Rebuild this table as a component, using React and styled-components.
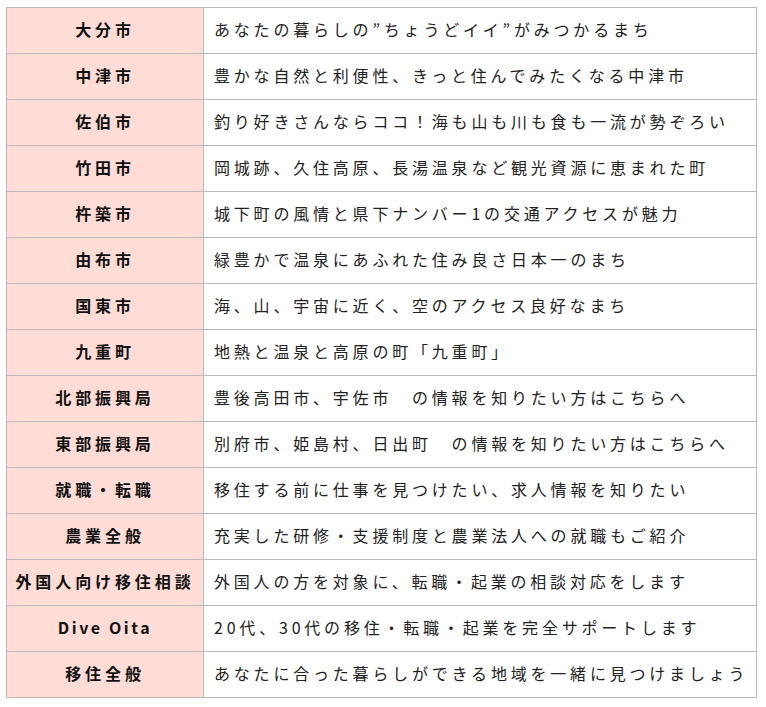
import styled, { createGlobalStyle } from "styled-components";

const GlobalStyle = createGlobalStyle`
  body {
    margin: 0;
    background: #fff;
    font-family: "Noto Sans CJK JP", "Noto Sans", sans-serif;
  }
`;

const Wrap = styled.div`
  padding: 7px 0 0 6px;
`;

const Table = styled.table`
  width: 751px;
  border-collapse: collapse;
  border: 1px solid #bbb;
`;

const Head = styled.th`
  width: 196px;
  height: 42px;
  padding: 0 0 3px;
  border: 1px solid #bbb;
  background: #ffdcd6;
  color: #111;
  font-size: 16px;
  font-weight: bold;
  letter-spacing: ${({ $latin }) => ($latin ? "2.6px" : "3.9px")};
  text-align: center;
  white-space: nowrap;
`;

const Cell = styled.td`
  height: 42px;
  padding: 0 0 3px 10px;
  border: 1px solid #bbb;
  color: #222;
  font-size: 16px;
  letter-spacing: 3.8px;
  white-space: nowrap;
`;

const rows = [
  ["大分市", "あなたの暮らしの”ちょうどイイ”がみつかるまち"],
  ["中津市", "豊かな自然と利便性、きっと住んでみたくなる中津市"],
  ["佐伯市", "釣り好きさんならココ！海も山も川も食も一流が勢ぞろい"],
  ["竹田市", "岡城跡、久住高原、長湯温泉など観光資源に恵まれた町"],
  ["杵築市", "城下町の風情と県下ナンバー1の交通アクセスが魅力"],
  ["由布市", "緑豊かで温泉にあふれた住み良さ日本一のまち"],
  ["国東市", "海、山、宇宙に近く、空のアクセス良好なまち"],
  ["九重町", "地熱と温泉と高原の町「九重町」"],
  ["北部振興局", "豊後高田市、宇佐市　の情報を知りたい方はこちらへ"],
  ["東部振興局", "別府市、姫島村、日出町　の情報を知りたい方はこちらへ"],
  ["就職・転職", "移住する前に仕事を見つけたい、求人情報を知りたい"],
  ["農業全般", "充実した研修・支援制度と農業法人への就職もご紹介"],
  ["外国人向け移住相談", "外国人の方を対象に、転職・起業の相談対応をします"],
  ["Dive Oita", "20代、30代の移住・転職・起業を完全サポートします", true],
  ["移住全般", "あなたに合った暮らしができる地域を一緒に見つけましょう"],
];

export default function App() {
  return (
    <Wrap>
      <GlobalStyle />
      <Table>
        <tbody>
          {rows.map(([name, text, latin]) => (
            <tr key={name}>
              <Head $latin={latin}>{name}</Head>
              <Cell>{text}</Cell>
            </tr>
          ))}
        </tbody>
      </Table>
    </Wrap>
  );
}
